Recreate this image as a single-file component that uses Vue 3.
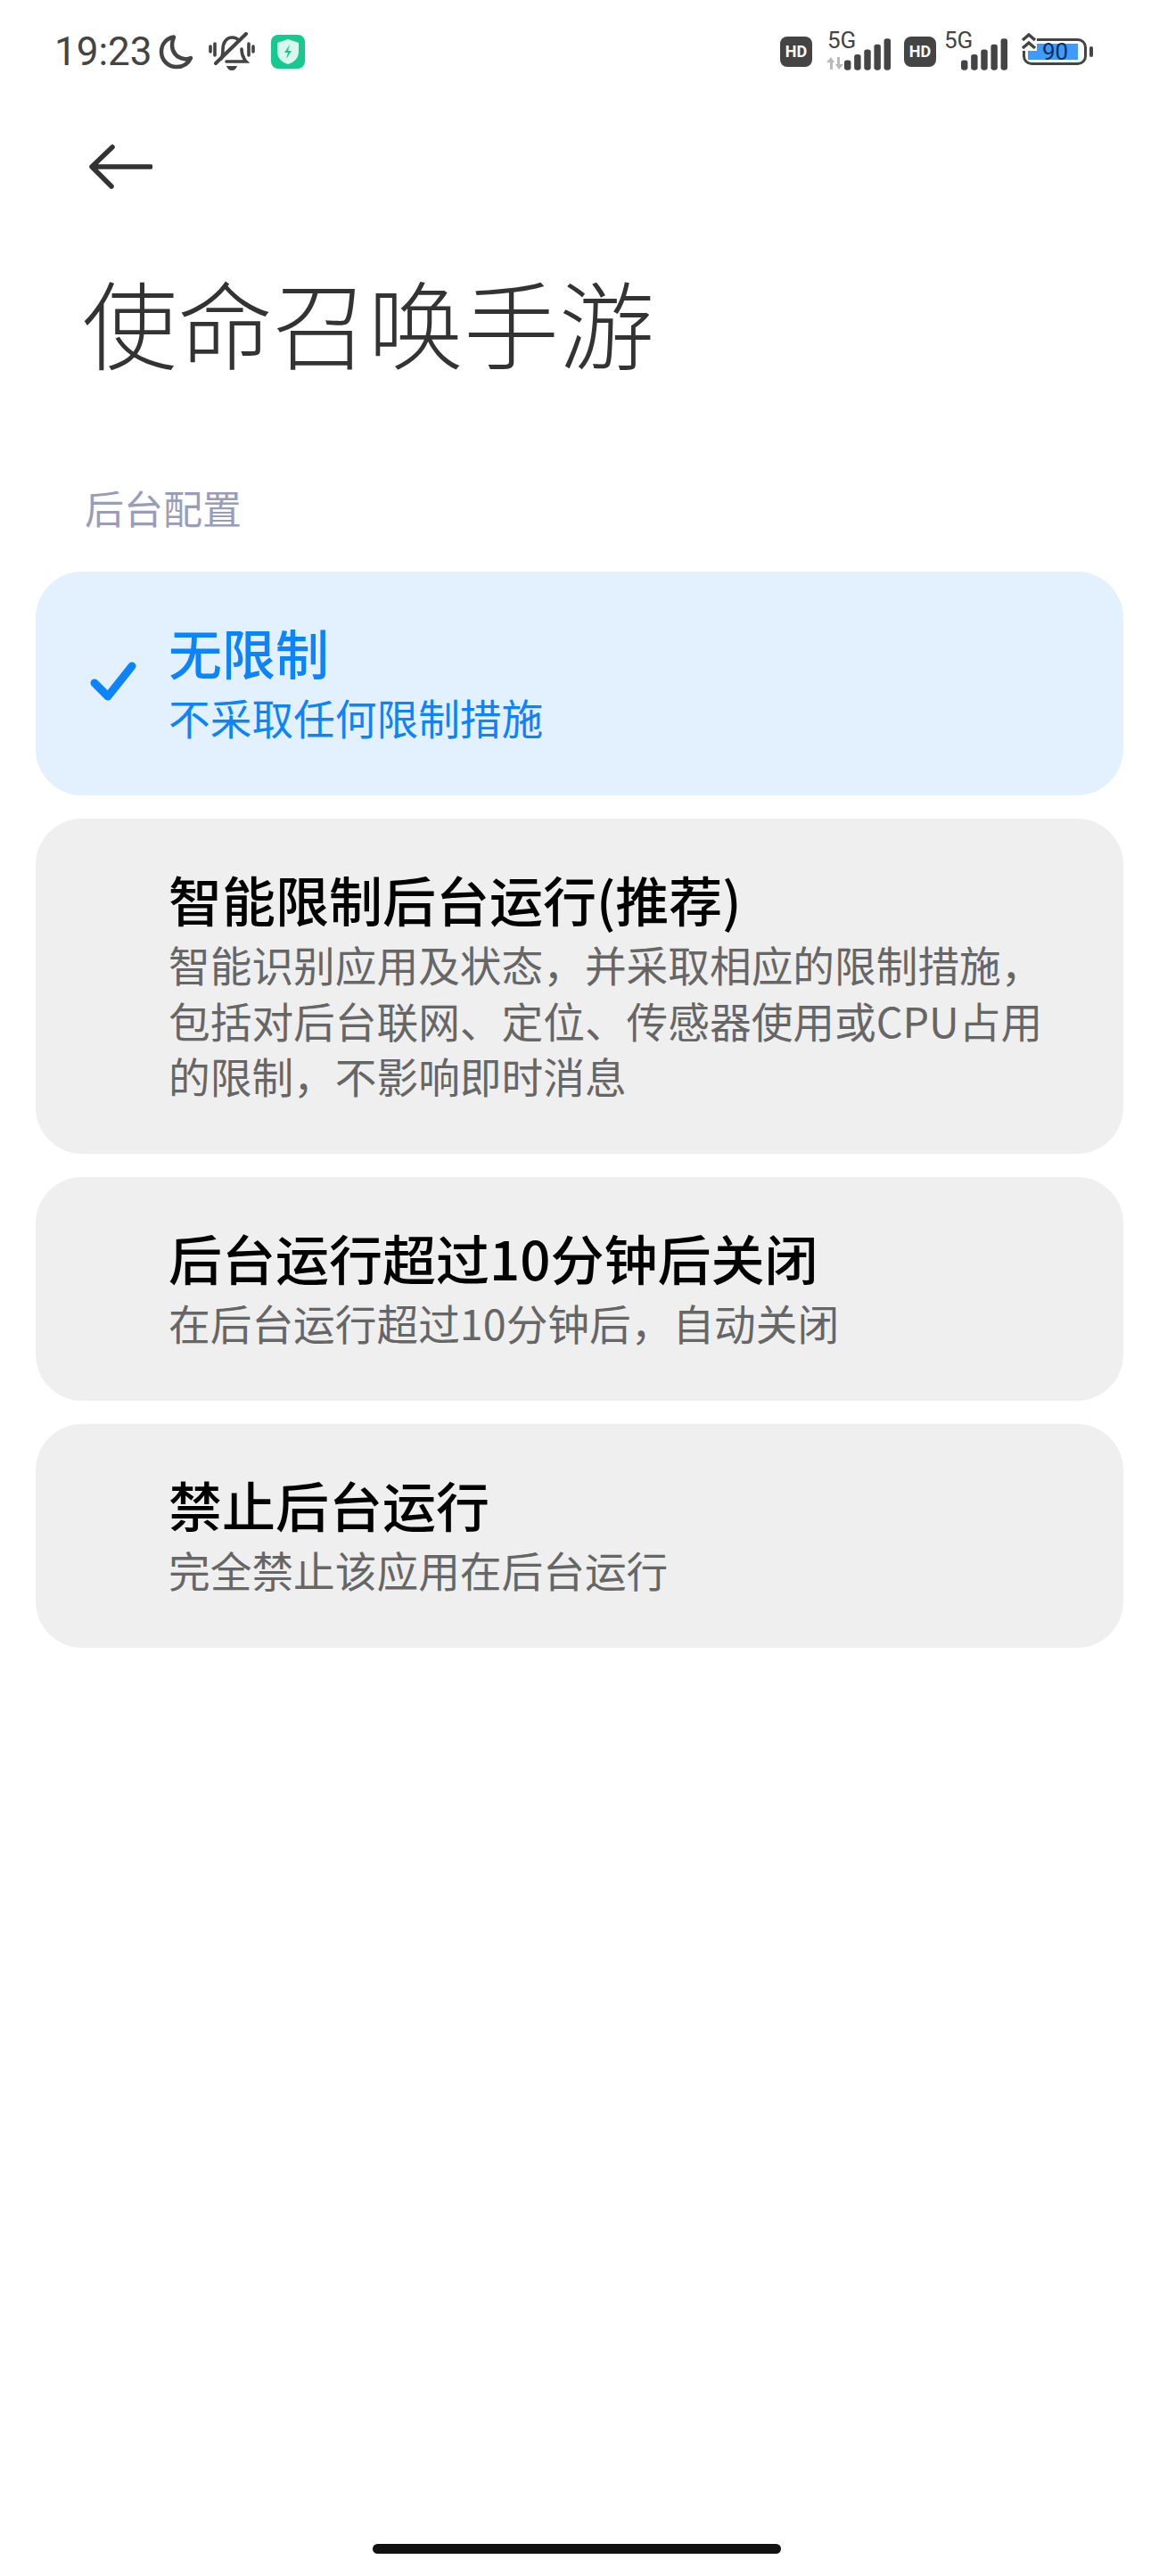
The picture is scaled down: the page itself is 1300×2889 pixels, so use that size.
<script setup>
const options = [
  { title: '无限制', desc: ['不采取任何限制措施'], active: true },
  {
    title: '智能限制后台运行(推荐)',
    desc: ['智能识别应用及状态，并采取相应的限制措施，', '包括对后台联网、定位、传感器使用或CPU占用', '的限制，不影响即时消息']
  },
  { title: '后台运行超过10分钟后关闭', desc: ['在后台运行超过10分钟后，自动关闭'] },
  { title: '禁止后台运行', desc: ['完全禁止该应用在后台运行'] }
]
</script>

<template>
  <div class="page">
    <div class="status">
      <div class="status-left">
        <span class="time">19:23</span>
        <svg class="moon" width="40" height="40" viewBox="0 0 40 40">
          <path d="M17 3.5C8.5 5 3 11.5 3 20c0 9.500 7.500 17 17 17 7.500 0 13-3.500 16-10-2 1-5 1.500-7.500 1C20 27 15 20 15 13c0-3.500.8-6.500 2-9.500z" fill="none" stroke="#444" stroke-width="4.500" stroke-linejoin="round" />
        </svg>
        <svg class="bell" width="52" height="44" viewBox="0 0 52 44">
          <g fill="none" stroke="#444" stroke-width="3.600" stroke-linecap="round">
            <path d="M2 16v6M7 13v13M45 13v13M50 16v6" />
            <path d="M14 30c2-3 2-6 2-11 0-7 4-13 10-13 4 0 7 2 8 4M37 19c0 5 1 8 3 11 1 2 2 3 2 3H20" />
            <path d="M42 2L8 35" stroke-width="4" />
          </g>
          <path d="M20 38h12c-1 3-3 5-6 5s-5-2-6-5z" fill="#444" />
        </svg>
        <span class="shield">
          <svg width="26" height="30" viewBox="0 0 26 30">
            <path d="M13 1l12 4v10c0 7-5 12-12 14C6 27 1 22 1 15V5z" fill="#d9f7ec" />
            <path d="M15 7l-6 9h4l-2 7 6-9h-4z" fill="#17c98e" />
          </svg>
        </span>
      </div>
      <div class="status-right">
        <span class="hd">HD</span>
        <div class="net first">
          <span class="five-g">5G</span>
          <svg class="arrows" width="22" height="14" viewBox="0 0 22 14">
            <path d="M5 14V6H1l5-6 4 6-2 0v8zM13 0h3v8h4l-5 6-4-6h2z" fill="#bbb" />
          </svg>
          <svg class="bars" width="56" height="38" viewBox="0 0 56 38">
            <rect x="0" y="26" width="8" height="12" rx="3" fill="#444" />
            <rect x="12" y="19" width="8" height="19" rx="3" fill="#444" />
            <rect x="24" y="13" width="8" height="25" rx="3" fill="#444" />
            <rect x="36" y="7" width="8" height="31" rx="3" fill="#444" />
            <rect x="48" y="0" width="8" height="38" rx="3" fill="#444" />
          </svg>
        </div>
        <span class="hd">HD</span>
        <div class="net">
          <span class="five-g">5G</span>
          <svg class="bars" width="56" height="38" viewBox="0 0 56 38">
            <rect x="0" y="26" width="8" height="12" rx="3" fill="#444" />
            <rect x="12" y="19" width="8" height="19" rx="3" fill="#444" />
            <rect x="24" y="13" width="8" height="25" rx="3" fill="#444" />
            <rect x="36" y="7" width="8" height="31" rx="3" fill="#444" />
            <rect x="48" y="0" width="8" height="38" rx="3" fill="#444" />
          </svg>
        </div>
        <div class="battery">
          <svg class="charge" width="18" height="20" viewBox="0 0 18 20">
            <path d="M2 8l7-6 7 6M2 17l7-6 7 6" fill="none" stroke="#444" stroke-width="3.500" />
          </svg>
          <div class="cell"><span class="fill"></span><span class="level">90</span></div>
          <span class="cap"></span>
        </div>
      </div>
    </div>

    <div class="back">
      <svg width="72" height="50" viewBox="0 0 72 50">
        <path d="M27 3L4 25l22 22M4 25h66" fill="none" stroke="#333" stroke-width="5.500" stroke-linecap="round" stroke-linejoin="round" />
      </svg>
    </div>

    <h1 class="title">使命召唤手游</h1>
    <div class="section">后台配置</div>

    <div class="list">
      <div v-for="opt in options" :key="opt.title" class="card" :class="{ active: opt.active }">
        <div class="check">
          <svg v-if="opt.active" width="52" height="46" viewBox="0 0 52 46">
            <path d="M5 24l15 15L47 5" fill="none" stroke="#0d84ff" stroke-width="9" stroke-linecap="round" stroke-linejoin="round" />
          </svg>
        </div>
        <div class="text">
          <div class="name">{{ opt.title }}</div>
          <div v-for="line in opt.desc" :key="line" class="desc">{{ line }}</div>
        </div>
      </div>
    </div>

    <div class="spacer"></div>
    <div class="home"></div>
  </div>
</template>

<style>
html, body {
  margin: 0;
  background: #fff;
}
</style>

<style scoped>
.page {
  width: 1300px;
  height: 2889px;
  display: flex;
  flex-direction: column;
  background: #fff;
  font-family: "Noto Sans CJK SC", "Noto Sans", sans-serif;
}
.status {
  height: 56px;
  padding: 30px 74px 0 61px;
  display: flex;
  justify-content: space-between;
  align-items: center;
}
.status-left, .status-right {
  display: flex;
  align-items: center;
}
.time {
  font: 400 44px/1 Roboto, sans-serif;
  color: #444;
}
.moon { margin-left: 7px; }
.bell { margin-left: 16px; }
.shield {
  width: 38px;
  height: 38px;
  margin-left: 18px;
  border-radius: 8px;
  background: #17c98e;
  display: flex;
  align-items: center;
  justify-content: center;
}
.hd {
  width: 36px;
  height: 34px;
  border-radius: 8px;
  background: #444;
  color: #fff;
  font: 700 18px/34px Roboto, sans-serif;
  text-align: center;
}
.net {
  position: relative;
  width: 71px;
  height: 44px;
  margin: 0 15px 0 9px;
}
.net.first { margin-left: 17px; }
.five-g {
  position: absolute;
  left: 0;
  top: -4px;
  font: 400 26px/1 Roboto, sans-serif;
  color: #444;
}
.arrows {
  position: absolute;
  left: -2px;
  bottom: 2px;
}
.bars {
  position: absolute;
  right: 0;
  bottom: 0;
  width: 52px;
}
.battery {
  display: flex;
  align-items: center;
  position: relative;
}
.charge {
  position: absolute;
  left: 0;
  top: -6px;
  z-index: 1;
  background: #fff;
}
.cell {
  position: relative;
  width: 72px;
  height: 30px;
  box-sizing: border-box;
  border: 3px solid #444;
  border-radius: 10px;
  margin-left: 2px;
}
.fill {
  position: absolute;
  left: 3px;
  top: 3px;
  bottom: 3px;
  width: 56px;
  background: #3f9bff;
}
.level {
  position: absolute;
  left: 19px;
  top: 0;
  font: 400 26px/24px Roboto, sans-serif;
  color: #12305a;
}
.cap {
  width: 4px;
  height: 12px;
  margin-left: 3px;
  border-radius: 2px;
  background: #444;
}
.back {
  margin: 76px 0 0 99px;
  height: 50px;
}
.title {
  margin: 73px 0 0 92px;
  font-size: 107px;
  font-weight: 300;
  line-height: 150px;
  color: #333;
}
.section {
  margin: 104px 0 0 95px;
  font-size: 44px;
  line-height: 60px;
  color: #9a9db8;
}
.list {
  margin: 42px 40px 0;
  display: flex;
  flex-direction: column;
  gap: 26px;
}
.card {
  display: flex;
  align-items: center;
  box-sizing: border-box;
  padding: 48px 40px 56.500px 60px;
  border-radius: 52px;
  background: #efefef;
}
.card.active {
  background: #e3f1fe;
}
.check {
  width: 89px;
  flex: none;
  display: flex;
  align-items: center;
  padding: 6px 0 0 1px;
  box-sizing: border-box;
}
.name {
  font-size: 60px;
  font-weight: 500;
  line-height: 84px;
  color: #000;
}
.desc {
  font-size: 46.700px;
  line-height: 62.500px;
  color: #666;
}
.active .name, .active .desc {
  color: #0d84ff;
}
.spacer {
  flex: 1;
}
.home {
  width: 458px;
  height: 11px;
  margin: 0 0 25px 418px;
  border-radius: 6px;
  background: #111;
}
</style>
